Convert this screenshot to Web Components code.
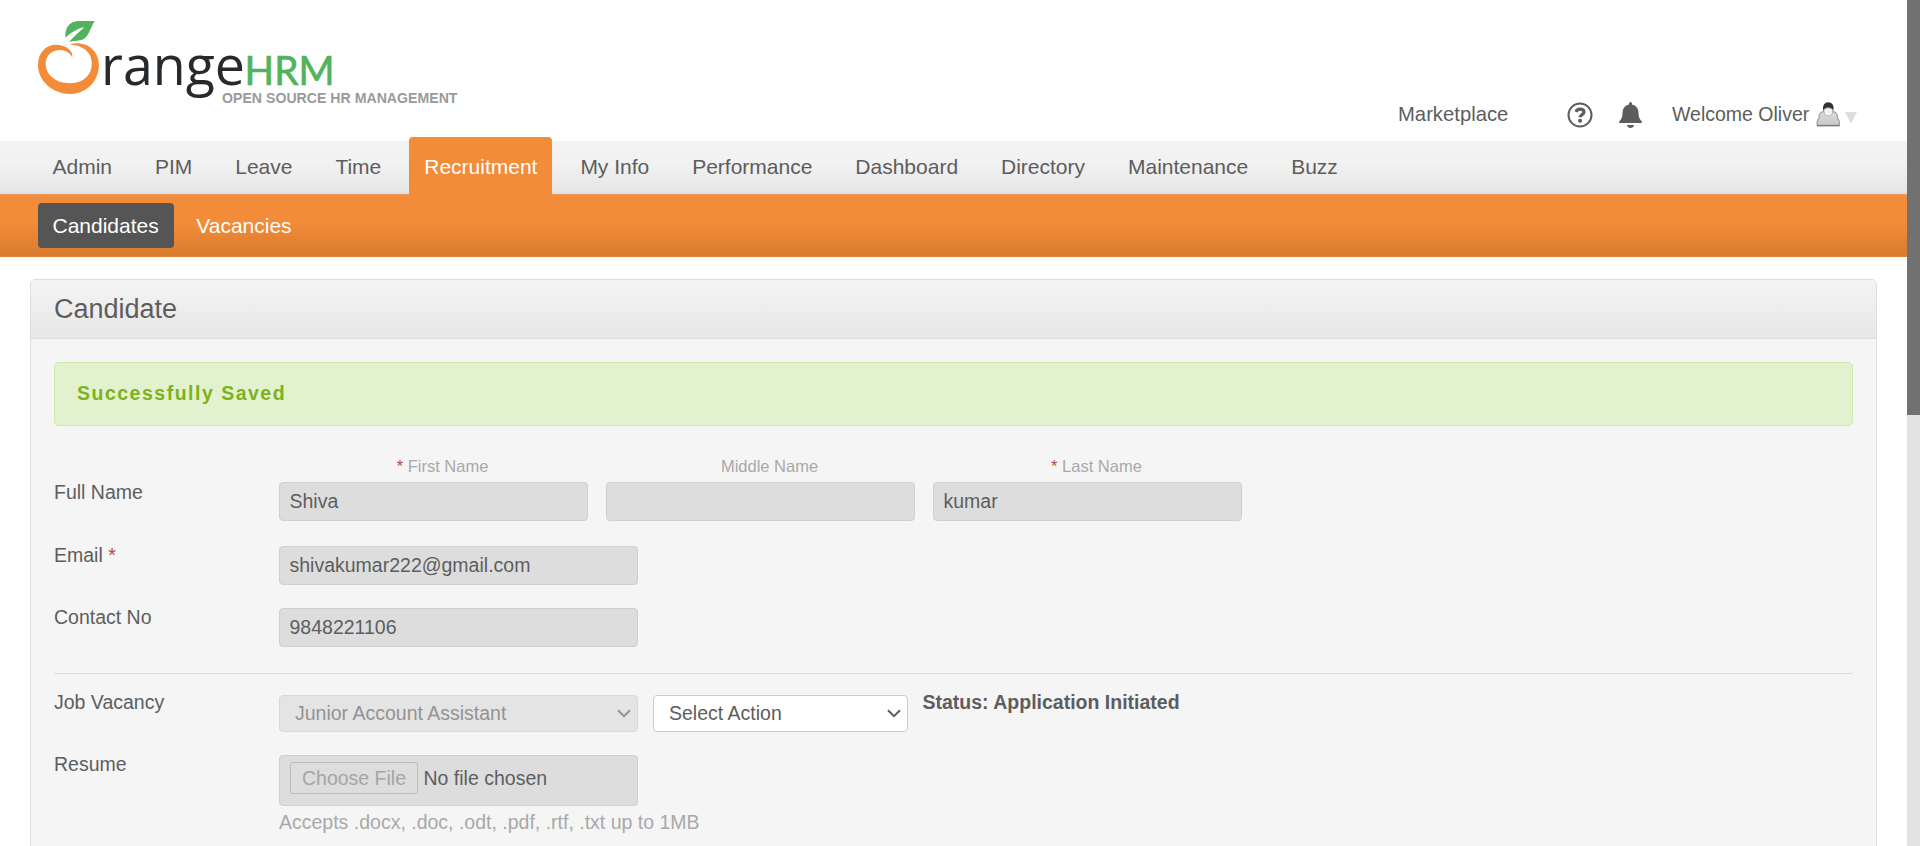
<!DOCTYPE html>
<html lang="en">
<head>
<meta charset="utf-8">
<title>OrangeHRM</title>
<style>
html,body{margin:0;height:100%;overflow:hidden;background:#fff}
body{font-family:"Liberation Sans",Arial,sans-serif;color:#5d5d5d}
</style>
</head>
<body>
<hrm-app></hrm-app>
<script>
function define(name, html) {
  const t = document.createElement('template');
  t.innerHTML = html;
  customElements.define(name, class extends HTMLElement {
    constructor() {
      super();
      this.attachShadow({mode: 'open'}).appendChild(t.content.cloneNode(true));
    }
  });
}

define('hrm-logo', `
<style>:host{display:block;width:422px;height:90px}svg{display:block;overflow:visible}</style>
<svg width="422" height="90" viewBox="38 20 422 90">
  <path fill="#f38c38" d="M72.300 57.500C69 51.500 63.500 49.600 58 50.200C50 51.200 45.300 57 45.700 64.500C46.200 76 57 83.400 70.500 83.200C83.500 83 91.800 75 91.800 63.500C91.700 53.500 85.500 46 69.300 44.200C86 40 98.900 50 98.900 65C98.900 81.500 86 94 70 94C54 94 38 82 38 65C38 52.500 46.500 44.800 55.500 44.800C65 44.800 73.500 50 72.300 57.500Z"/>
  <path fill="#52b35c" d="M65.300 37.800C65 28 68.500 21 80 21H94.600C90 29 88.500 37.500 82 39.800C77.500 41.300 73 40.800 69 42C74 36.500 79 32 84.500 27C76.500 29 70.500 32.800 65.300 37.800Z"/>
  <text x="101" y="85" font-family="Open Sans,sans-serif" font-size="54" fill="#262a2d" textLength="144" lengthAdjust="spacingAndGlyphs">range</text>
  <text x="244.500" y="84.500" font-family="Lato,sans-serif" font-size="40" fill="#52b35c" stroke="#52b35c" stroke-width=".7" textLength="90" lengthAdjust="spacingAndGlyphs">HRM</text>
  <text x="222" y="102.600" font-family="Liberation Sans,sans-serif" font-weight="700" font-size="14" fill="#9a9a9a" textLength="235.500" lengthAdjust="spacingAndGlyphs">OPEN SOURCE HR MANAGEMENT</text>
</svg>`);

define('hrm-header', `
<style>
:host{display:flex;box-sizing:border-box;height:141px;padding:20px 50px 0 38px;justify-content:space-between;font-size:19.500px;line-height:24px}
.right{display:flex;align-items:flex-start;padding-top:82px}
svg{display:block}
.m{width:169px;font-size:20.250px}.b{margin:0 30px 0 26px}.w{width:138px;margin-right:6px;white-space:nowrap}.a{margin-right:4px}.t{margin-top:10px}
</style>
<hrm-logo></hrm-logo>
<div class="right">
  <span class="m">Marketplace</span>
  <svg class="h" width="26" height="26" viewBox="0 0 26 26" fill="none" stroke="#5d5d5d"><circle cx="13" cy="13" r="11.500" stroke-width="2"/><path d="M9 9.800C9.800 7.800 11.200 7.200 13 7.200C15.300 7.200 17 8.300 17 10.100C17 12.600 13.100 12.500 13.100 15.200" stroke-width="3.200"/><circle cx="13.100" cy="18.700" r="2" fill="#5d5d5d" stroke="none"/></svg>
  <svg class="b" width="23" height="26" viewBox="0 0 23 26" fill="#5d5d5d"><path d="M10 2.500V1.500Q10 0 11.500 0T13 1.500V2.500Q19.500 4 19.500 11Q19.500 16.500 22.800 19.500V21H.2V19.500Q3.500 16.500 3.500 11Q3.500 4 10 2.500ZM8 23H15Q14.500 26 11.500 26T8 23Z"/></svg>
  <span class="w">Welcome Oliver</span>
  <svg class="a" width="25" height="25" viewBox="0 0 25 25"><defs><linearGradient id="g" x1="0" y1="0" x2="0" y2="1"><stop offset="0" stop-color="#dcdcdc"/><stop offset="1" stop-color="#c8c8c8"/></linearGradient></defs><path d="M1.200 23.500Q.8 18 3 16.500Q2.500 11 7 9.500H17.500Q22 11 21.500 16.500Q23.800 18 23.300 23.500Z" fill="url(#g)" stroke="#a2a2a2" stroke-width="1.300"/><path d="M1 23.600H23.500" stroke="#7d7d7d" stroke-width="1.300"/><path d="M7 8Q6.500 .3 12.300.3T17.500 8L16 10H9Z" fill="#333"/><path d="M8 7.500Q12 4 16.700 7.500V9.500Q16.500 14 12.400 14T8 9.500Z" fill="#f3f3f3" stroke="#a8a8a8" stroke-width=".8"/></svg>
  <svg class="t" width="12" height="12"><path d="M0 0H12L6 11.500Z" fill="#ddd"/></svg>
</div>`);

define('hrm-menu', `
<style>
:host{display:flex;height:53px;padding-left:37.500px;gap:12.950px;background:linear-gradient(#f3f3f3 0,#f2f2f2 40%,#e6e6e6 96%,#ddd 100%);font-size:21px;line-height:52px}
</style><slot></slot>`);
define('hrm-menu-item', `
<style>
:host{display:block;padding:0 15px;white-space:nowrap}
:host([active]){position:relative;height:55px;margin-top:-4px;padding-top:4px;background:#f38c38;color:#fff;border-radius:4px 4px 0 0}
</style><slot></slot>`);
define('hrm-submenu', `
<style>
:host{display:flex;box-sizing:border-box;height:63px;padding:9px 0 0 38px;gap:7.500px;background:linear-gradient(#e9a167 0,#ef8f43 1.500px,#f38c38 4px,#f38c38 45%,#d97b2f 97%,#de8844 100%);font-size:21px;line-height:45px;color:#fff}
</style><slot></slot>`);
define('hrm-submenu-item', `
<style>
:host{display:block;height:45px;padding:0 15.500px 0 14.500px;border-radius:4px}
:host([active]){background:#555}
</style><slot></slot>`);

define('hrm-card', `
<style>
:host{display:block;margin:22px 30px 0;height:700px;border:1px solid #dedede;border-radius:5px 5px 0 0;background:#f5f5f5;box-sizing:border-box}
.head{height:58px;border-bottom:1px solid #dedede;background:linear-gradient(#f4f4f4,#e7e7e7);border-radius:4px 4px 0 0;padding-left:23px;font-size:27px;line-height:58px}
.body{padding:23px 23px 0}
</style>
<div class="head"><slot name="title"></slot></div><div class="body"><slot></slot></div>`);
define('hrm-message', `
<style>
:host{display:block;box-sizing:border-box;height:64px;margin-bottom:30px;padding-left:22px;border:1px solid #cfeaa9;border-radius:5px;background:#e3f2ce;color:#7eb120;font-weight:700;font-size:19.500px;letter-spacing:1.500px;line-height:60px}
</style><slot></slot>`);
define('hrm-row', `
<style>
:host{display:grid;grid-template-columns:225px 1fr;height:62px;font-size:19.500px;line-height:24px}
:host([names]){height:87px}
:host([names]) .label{padding-top:24px}
:host([names]) .ctl{padding:0;gap:18px}
:host([last]){height:68px}
:host([choices]) .ctl{padding-top:5px}
.ctl{display:flex;align-items:flex-start;padding-top:3px}
</style><div class="label"><slot name="label"></slot></div><div class="ctl"><slot></slot></div>`);
define('hrm-star', `<style>:host{color:#b24a45}</style>*`);
define('hrm-name', `
<style>
:host{display:block;width:309px}
.hint{height:26px;font-size:16.500px;line-height:21px;text-align:center;color:#a9a9a9;padding-left:18px}
</style><div class="hint"><slot name="hint"></slot></div><slot></slot>`);
define('hrm-field', `
<style>
:host{display:block;box-sizing:border-box;width:359px;height:39px;padding-left:9.500px;border:1px solid #cfcfcf;border-radius:4px;background:#ddd;line-height:37px}
:host([fill]){width:auto}
</style><slot></slot>`);
define('hrm-select', `
<style>
:host{display:flex;box-sizing:border-box;justify-content:space-between;align-items:center;width:255px;height:37px;padding:0 6px 0 15px;border:1px solid #ccc;border-radius:4px;background:#fff;line-height:35px}
:host([disabled]){width:359px;margin-right:15px;background:#e4e4e4;border-color:#d9d9d9;color:#939393}
svg{display:block}
</style><slot></slot><svg width="14" height="9" viewBox="0 0 14 9" fill="none" stroke="currentColor" stroke-width="2"><path d="M1 1.200L7 7.200L13 1.200"/></svg>`);
define('hrm-file', `
<style>
:host{display:flex;flex-direction:column;width:500px}
.box{display:flex;align-items:flex-start;gap:5.500px;box-sizing:border-box;width:359px;height:51px;padding:6px 0 0 10px;border:1px solid #cfcfcf;border-radius:4px;background:#ddd;line-height:32px}
.btn{box-sizing:border-box;width:128px;height:32px;border:1px solid #bbb;border-radius:3px;line-height:30px;text-align:center;color:#a5a5a5}
.help{margin-top:4px;color:#a9a9a9}
</style>
<div class="box"><span class="btn">Choose File</span><span>No file chosen</span></div><div class="help">Accepts .docx, .doc, .odt, .pdf, .rtf, .txt up to 1MB</div>`);

define('hrm-app', `
<style>
:host{display:grid;grid-template-columns:1fr 13px;height:846px;overflow:hidden}
main{min-width:0;height:846px;overflow:hidden}
.track{background:#e3e3e3}
.thumb{height:415px;background:#717171}
hr{margin:0 0 16px;border:0;border-top:1px solid #dcdcdc}
strong{margin:-5px 0 0 14.500px}
</style>
<main>
<hrm-header></hrm-header>
<hrm-menu>
<hrm-menu-item>Admin</hrm-menu-item><hrm-menu-item>PIM</hrm-menu-item><hrm-menu-item>Leave</hrm-menu-item><hrm-menu-item>Time</hrm-menu-item><hrm-menu-item active>Recruitment</hrm-menu-item><hrm-menu-item>My Info</hrm-menu-item><hrm-menu-item>Performance</hrm-menu-item><hrm-menu-item>Dashboard</hrm-menu-item><hrm-menu-item>Directory</hrm-menu-item><hrm-menu-item>Maintenance</hrm-menu-item><hrm-menu-item>Buzz</hrm-menu-item>
</hrm-menu>
<hrm-submenu><hrm-submenu-item active>Candidates</hrm-submenu-item><hrm-submenu-item>Vacancies</hrm-submenu-item></hrm-submenu>
<hrm-card>
<span slot="title">Candidate</span>
<hrm-message>Successfully Saved</hrm-message>
<hrm-row names><span slot="label">Full Name</span>
<hrm-name><span slot="hint"><hrm-star></hrm-star> First Name</span><hrm-field fill>Shiva</hrm-field></hrm-name>
<hrm-name><span slot="hint">Middle Name</span><hrm-field fill></hrm-field></hrm-name>
<hrm-name><span slot="hint"><hrm-star></hrm-star> Last Name</span><hrm-field fill>kumar</hrm-field></hrm-name>
</hrm-row>
<hrm-row><span slot="label">Email <hrm-star></hrm-star></span><hrm-field>shivakumar222@gmail.com</hrm-field></hrm-row>
<hrm-row last><span slot="label">Contact No</span><hrm-field>9848221106</hrm-field></hrm-row>
<hr>
<hrm-row choices><span slot="label">Job Vacancy</span><hrm-select disabled>Junior Account Assistant</hrm-select><hrm-select>Select Action</hrm-select><strong>Status: Application Initiated</strong></hrm-row>
<hrm-row><span slot="label">Resume</span><hrm-file></hrm-file></hrm-row>
</hrm-card>
</main>
<div class="track"><div class="thumb"></div></div>`);
</script>
</body>
</html>
